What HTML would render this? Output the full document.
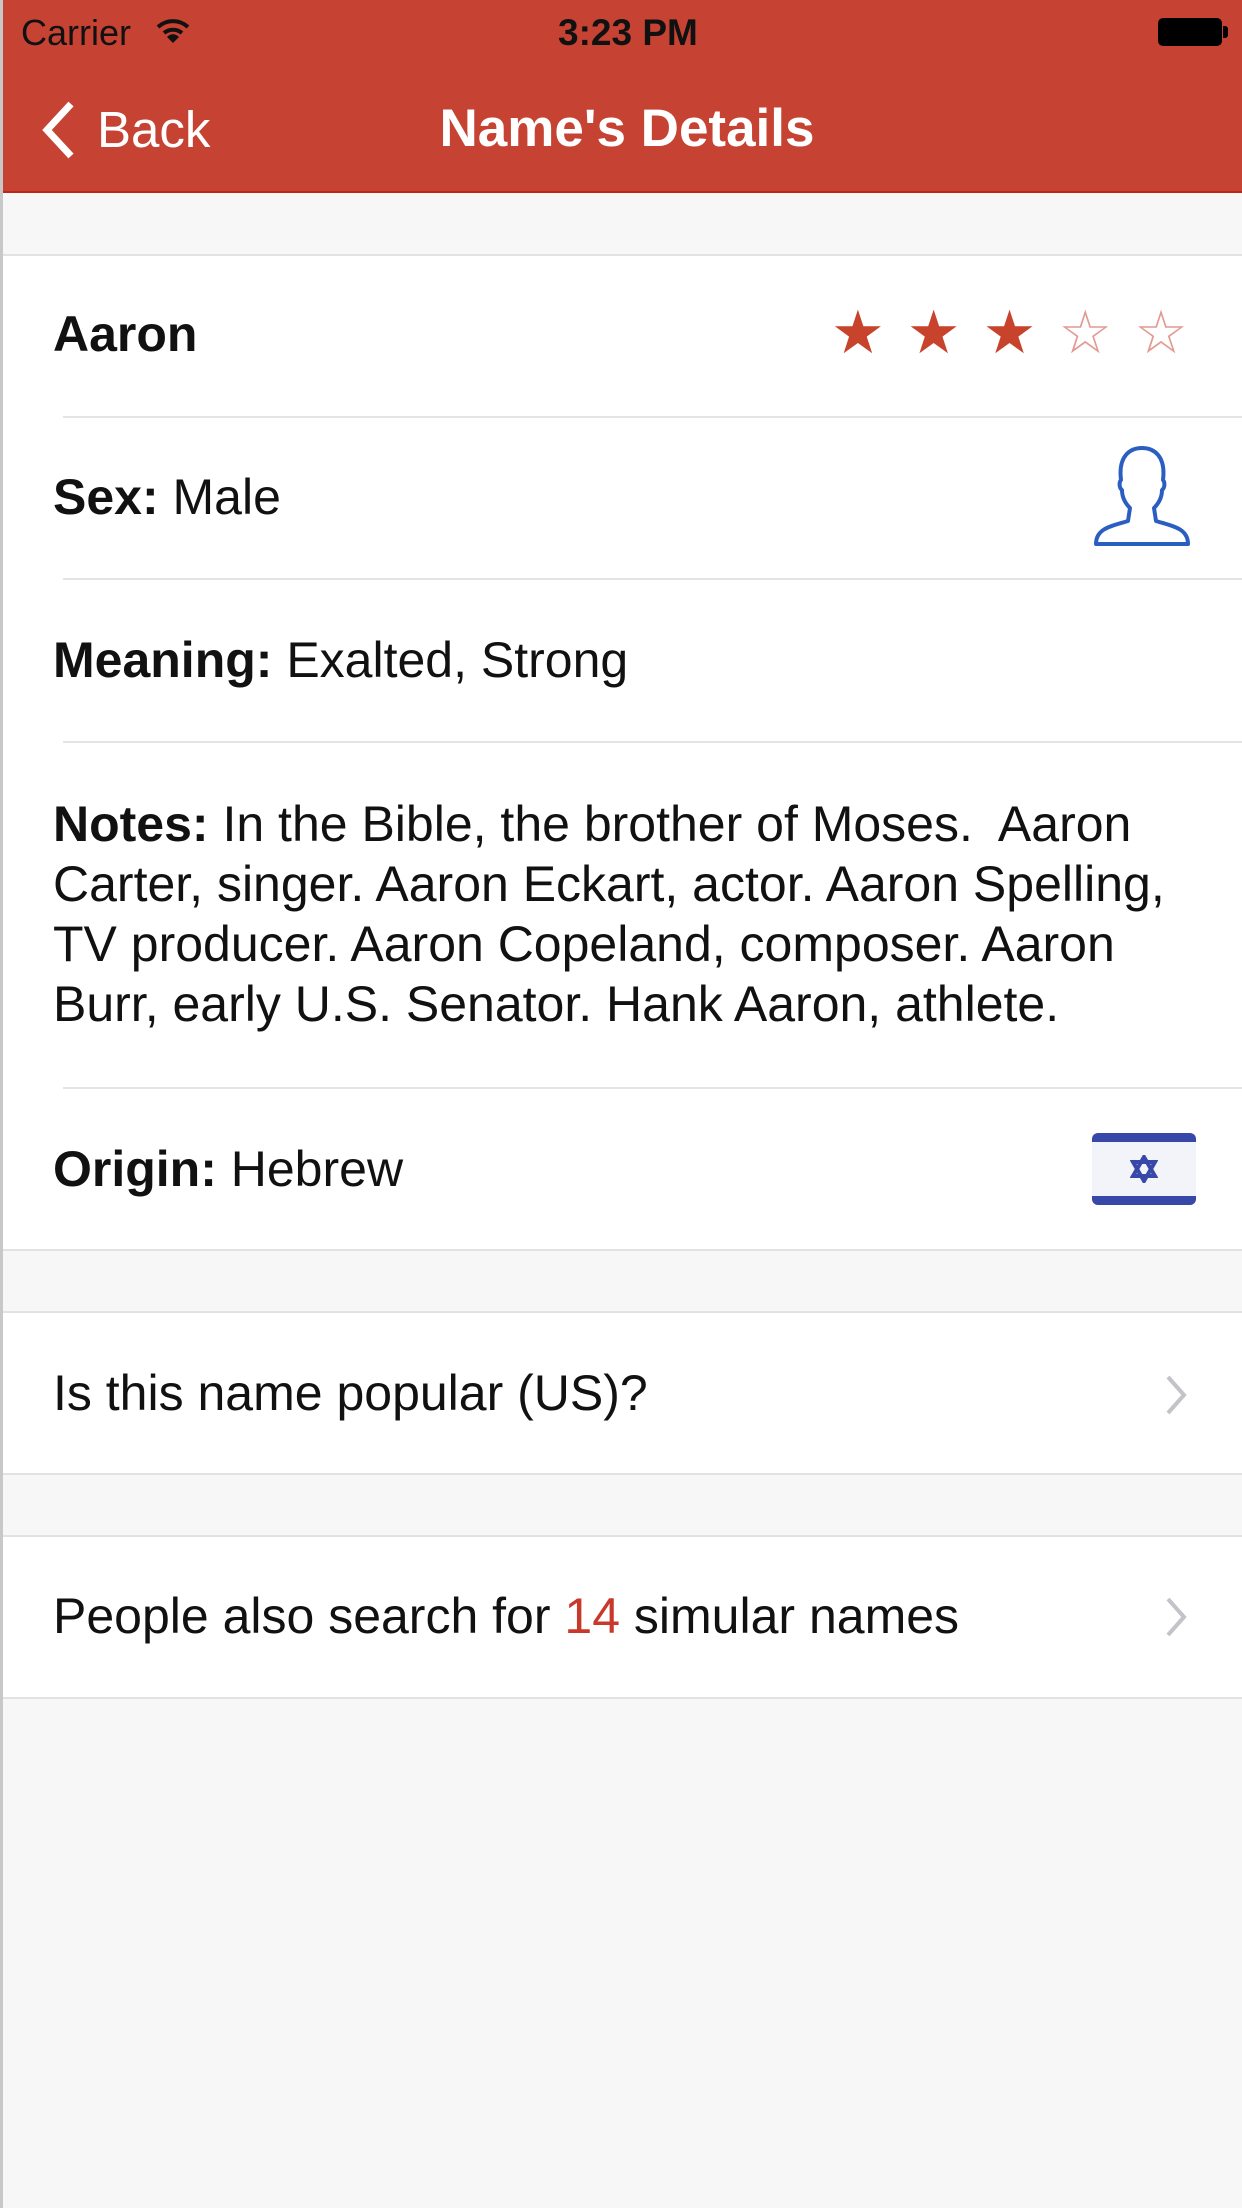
<!DOCTYPE html>
<html><head><meta charset="utf-8"><style>
*{margin:0;padding:0;box-sizing:border-box}
body{width:1242px;height:2208px;background:#f7f7f7;font-family:"Liberation Sans",sans-serif;position:relative;overflow:hidden;color:#111;border-left:3px solid #c8c8c8}
.a{position:absolute;white-space:nowrap}
.nav{position:absolute;left:0;top:0;width:1242px;height:193px;background:#c64333;border-bottom:2px solid #c0241b}
.sec{position:absolute;left:0;width:1242px;background:#fff;border-top:2px solid #e2e2e2;border-bottom:2px solid #e2e2e2}
.sep{position:absolute;left:60px;right:0;height:2px;background:#e4e4e4}
.t{font-size:50px;line-height:60px}
b{font-weight:bold}
.chev{position:absolute;width:34px;height:34px}
</style></head><body>
<div class="nav"></div>
<div class="a" style="left:18px;top:12px;font-size:36px;color:#111">Carrier</div>
<svg class="a" style="left:152px;top:16px" width="36" height="30" viewBox="0 0 36 30"><path d="M3 11 A22 22 0 0 1 33 11" stroke="#111" stroke-width="4" fill="none"/><path d="M9 17 A14 14 0 0 1 27 17" stroke="#111" stroke-width="4" fill="none"/><path d="M18 27 L12 21 A8 8 0 0 1 24 21 Z" fill="#111"/></svg>
<div class="a" style="left:555px;top:12px;font-size:37px;font-weight:bold;color:#111">3:23 PM</div>
<div class="a" style="left:1155px;top:18px;width:64px;height:28px;background:#000;border-radius:5px"></div>
<div class="a" style="left:1220px;top:26px;width:5px;height:12px;background:#000;border-radius:0 3px 3px 0"></div>
<svg class="a" style="left:36px;top:100px" width="36" height="60" viewBox="0 0 36 60"><path d="M32 4 L8 30 L32 56" stroke="#fff" stroke-width="7" fill="none"/></svg>
<div class="a" style="left:94px;top:100px;font-size:51px;color:#fff">Back</div>
<div class="a" style="left:0;width:1248px;text-align:center;top:98px;font-size:53px;font-weight:bold;color:#fff">Name's Details</div>

<div class="sec" style="top:254px;height:997px"></div>
<div class="a t" style="left:50px;top:304px"><b>Aaron</b></div>
<div class="a" style="left:828px;top:298px;font-size:60px;color:#c8432b;letter-spacing:22px">★★★<span style="color:#e39a92">☆☆</span></div>
<div class="sep" style="top:416px"></div>
<div class="a t" style="left:50px;top:467px"><b>Sex:</b> Male</div>
<svg class="a" style="left:1089px;top:444px" width="100" height="104" viewBox="0 0 100 104"><path d="M4 100 C4 84 20 82 36 77 L38 64 C32 58 30 52 30 46 C27 44 27 38 29 36 C26 12 38 4 50 4 C62 4 74 12 71 36 C73 38 73 44 70 46 C70 52 68 58 62 64 L64 77 C80 82 96 84 96 100 Z" stroke="#2a5fc1" stroke-width="4" fill="none" stroke-linejoin="round"/></svg>
<div class="sep" style="top:578px"></div>
<div class="a t" style="left:50px;top:630px"><b>Meaning:</b> Exalted, Strong</div>
<div class="sep" style="top:741px"></div>
<div class="a t" style="left:50px;top:794px;white-space:nowrap">
<b>Notes:</b> In the Bible, the brother of Moses.&nbsp; Aaron<br>Carter, singer. Aaron Eckart, actor. Aaron Spelling,<br>TV producer. Aaron Copeland, composer. Aaron<br>Burr, early U.S. Senator. Hank Aaron, athlete.</div>
<div class="sep" style="top:1087px"></div>
<div class="a t" style="left:50px;top:1139px"><b>Origin:</b> Hebrew</div>
<div class="a" style="left:1089px;top:1133px;width:104px;height:72px;background:#f3f4fa;border-radius:6px;overflow:hidden">
<div style="position:absolute;left:0;top:0;width:104px;height:9px;background:#3748a8"></div>
<div style="position:absolute;left:0;bottom:0;width:104px;height:9px;background:#3748a8"></div>
<svg style="position:absolute;left:38px;top:22px" width="28" height="28" viewBox="0 0 28 28"><path d="M14 2 L25 21 L3 21 Z M14 26 L3 7 L25 7 Z" stroke="#3748a8" stroke-width="4" fill="none"/></svg>
</div>

<div class="sec" style="top:1311px;height:164px"></div>
<div class="a t" style="left:50px;top:1363px">Is this name popular (US)?</div>
<svg class="chev" style="left:1156px;top:1374px;height:42px" viewBox="0 0 24 42"><path d="M4 3 L20 21 L4 39" stroke="#c4c4c8" stroke-width="4" fill="none"/></svg>

<div class="sec" style="top:1535px;height:164px"></div>
<div class="a t" style="left:50px;top:1586px">People also search for <span style="color:#c8392b">14</span> simular names</div>
<svg class="chev" style="left:1156px;top:1596px;height:42px" viewBox="0 0 24 42"><path d="M4 3 L20 21 L4 39" stroke="#c4c4c8" stroke-width="4" fill="none"/></svg>
</body></html>
